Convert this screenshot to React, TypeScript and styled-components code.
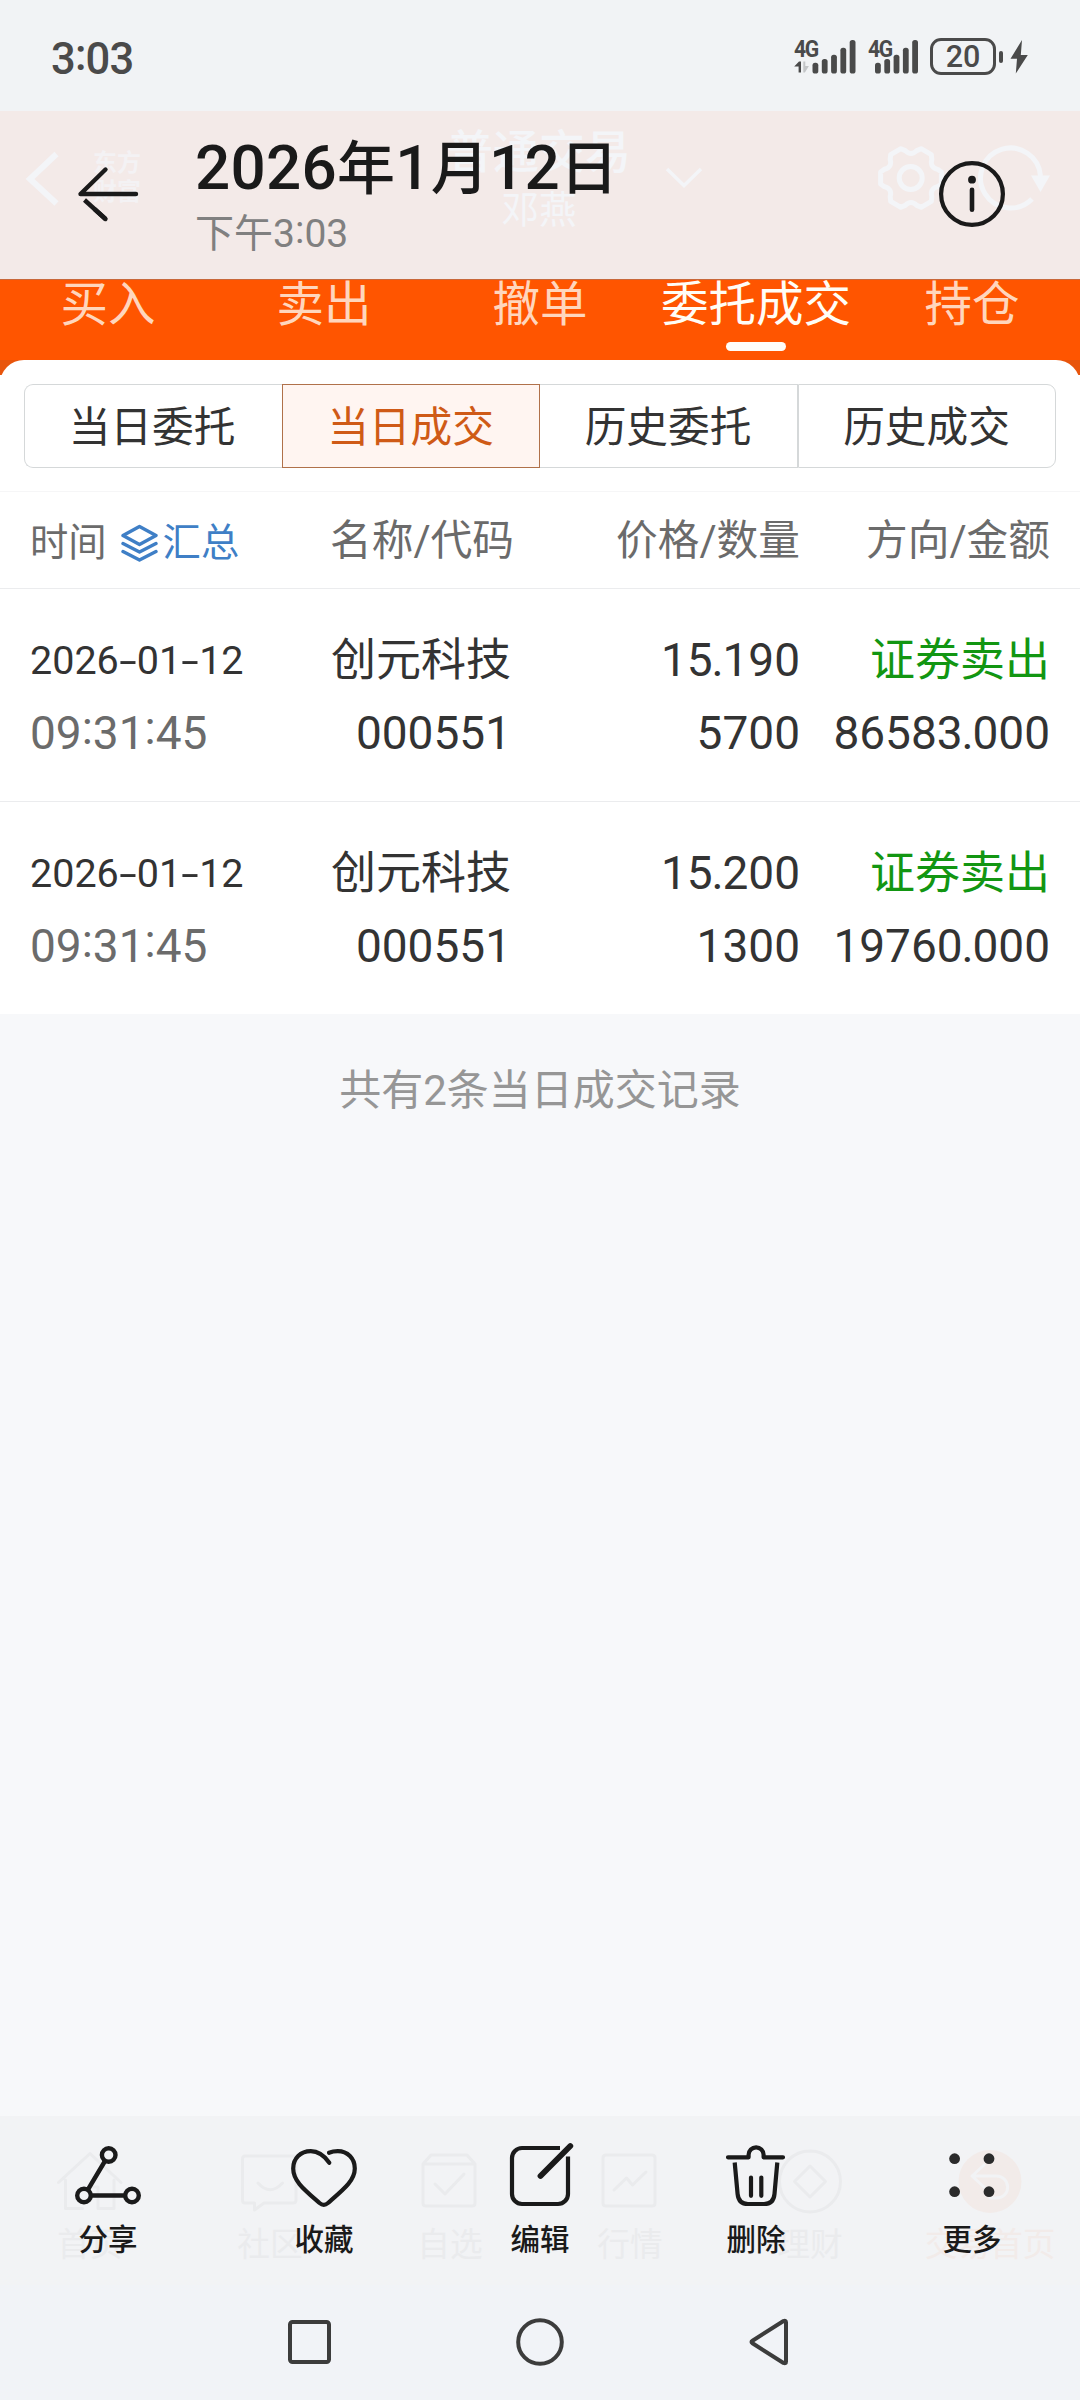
import React from "react";
import styled, { createGlobalStyle } from "styled-components";

const GlobalStyle = createGlobalStyle`
  *, *::before, *::after { box-sizing: border-box; }
  html, body { margin: 0; padding: 0; background: #f7f8fa; }
  body { font-family: Roboto, "Noto Sans CJK SC", sans-serif; }
`;

const Screen = styled.div`
  width: 1080px;
  height: 2400px;
  display: flex;
  flex-direction: column;
  background: #f7f8fa;
  overflow: hidden;
`;

/* ---------- text helpers ---------- */

const Colon = styled.span`
  vertical-align: 0.1em;
  line-height: 0;
`;
const Point = styled.span`
  margin: 0 -0.026em;
`;
const Dash = styled.span`
  display: inline-block;
  width: 0.455em;
  text-align: center;
  transform: scaleX(1.6);
`;

const Figures = ({ children }: { children: string }) => (
  <>
    {children.split(/([:.\-])/).map((part, i) => {
      if (part === ":") return <Colon key={i}>:</Colon>;
      if (part === ".") return <Point key={i}>.</Point>;
      if (part === "-") return <Dash key={i}>-</Dash>;
      return part;
    })}
  </>
);

/* ---------- status bar ---------- */

const StatusBar = styled.header`
  flex: none;
  height: 111px;
  padding: 2px 51px 0 51px;
  display: flex;
  align-items: center;
  justify-content: space-between;
  background: #f1f3f5;
  color: #4a4a4a;
`;
const Clock = styled.time`
  padding-top: 6px;
  font-size: 43.5px;
  line-height: 50px;
  font-weight: 500;
  letter-spacing: -0.8px;
`;
const StatusIcons = styled.div`
  display: flex;
  align-items: center;
  height: 38px;
`;
const Signal = styled.div<{ $w: number; $gap: number }>`
  position: relative;
  width: ${(p) => p.$w}px;
  height: 36px;
  margin-right: ${(p) => p.$gap}px;
  svg { display: block; }
`;
const Network = styled.span`
  position: absolute;
  left: 0;
  top: -1px;
  font-size: 23px;
  line-height: 24px;
  font-weight: 700;
  letter-spacing: -1.5px;
  transform: scaleX(0.92);
  transform-origin: left;
`;
const Battery = styled.div`
  width: 66px;
  height: 37px;
  border: 3px solid #4a4a4a;
  border-radius: 11px;
  display: flex;
  align-items: center;
  justify-content: center;
  font-size: 30.5px;
  line-height: 31px;
  font-weight: 500;
`;
const BatteryCap = styled.i`
  width: 4px;
  height: 12px;
  margin: 0 7px 0 3px;
  border-radius: 2px;
  background: #4a4a4a;
`;

const tops = [22.7, 19, 14.7, 7.7, 0];
const Bars = ({ x, w }: { x: number; w: number }) => (
  <svg width={w} height="36" fill="#4a4a4a">
    {tops.map((t, i) => (
      <rect key={i} x={x + i * 9.3} y={t + 1} width="5.8" height={33.5 - t} rx="2.6" />
    ))}
    {x > 10 && (
      <>
        <path d="M5 22.5 h2 v11 h-2.4 v-6 h-4.4 z" />
        <path d="M9.3 22.5 h2 v4.5 h3.6 l-4 6.5 h-1.6 z" fill="#c4c6c8" />
      </>
    )}
  </svg>
);

/* ---------- gallery header ---------- */

const TitleBar = styled.section`
  flex: none;
  position: relative;
  height: 168px;
  display: flex;
  background: #f3eae8;
  color: #1a1a1a;
`;
const Underlay = styled.div`
  position: absolute;
  inset: 0;
  color: #f3f5f8;
  svg { position: absolute; left: 0; top: 0; }
`;
const FaintTitle = styled.div`
  position: absolute;
  left: 446px;
  top: 13px;
  width: 186px;
  text-align: center;
  font-size: 46px;
  line-height: 56px;
  font-weight: 500;
`;
const FaintName = styled.div`
  font-size: 37.5px;
  line-height: 56px;
  font-weight: 400;
  padding-top: 2px;
`;
const FaintBrand = styled.div`
  position: absolute;
  left: 93px;
  top: 38px;
  font-size: 24px;
  line-height: 29px;
  font-weight: 700;
  opacity: 0.75;
`;
const BackButton = styled.div`
  position: relative;
  width: 195px;
  height: 168px;
  svg { display: block; }
`;
const TitleText = styled.div`
  position: relative;
  flex: 1;
`;
const Title = styled.h1`
  margin: 21px 0 0;
  font-size: 58px;
  line-height: 74px;
  font-weight: 500;
  letter-spacing: 0.25px;
  white-space: nowrap;
`;
const TitleNum = styled.span`
  font-size: 62px;
  line-height: 0;
`;
const Subtitle = styled.div`
  margin-top: 3px;
  font-size: 39px;
  line-height: 50px;
  color: #808080;
`;
const InfoButton = styled.div`
  position: relative;
  width: 216px;
  height: 168px;
`;

const gearPath = (() => {
  const p = (r: number, deg: number) => {
    const a = (deg * Math.PI) / 180;
    return `${(911 + r * Math.cos(a)).toFixed(1)} ${(67 + r * Math.sin(a)).toFixed(1)}`;
  };
  let d = "";
  for (let i = 0; i < 6; i++) {
    const a = i * 60;
    d += `${i ? "L" : "M"}${p(31, a - 11)} L${p(31, a + 11)} L${p(28, a + 18)} Q${p(21.5, a + 30)} ${p(28, a + 42)} `;
  }
  return d + "Z";
})();

/* ---------- trade tabs ---------- */

const Tabs = styled.nav`
  flex: none;
  height: 81px;
  display: grid;
  grid-template-columns: repeat(5, 1fr);
  background: #ff5500;
  border-top: 1px solid #c8683a;
`;
const Tab = styled.div<{ $on?: boolean }>`
  display: flex;
  flex-direction: column;
  align-items: center;
  font-size: 47.5px;
  line-height: 50px;
  color: ${(p) => (p.$on ? "#fffdf6" : "#ffd6bd")};
  &::after {
    content: "";
    width: 60px;
    height: 9px;
    margin-top: 12px;
    border-radius: 5px;
    background: ${(p) => (p.$on ? "#fffdf8" : "transparent")};
  }
`;

/* ---------- records panel ---------- */

const PanelEdge = styled.div`
  flex: none;
  background: linear-gradient(#e8550c 15px, #ffffff 15px);
`;
const Panel = styled.main`
  background: #ffffff;
  border-radius: 24px 24px 0 0;
`;
const Segments = styled.div`
  height: 131px;
  padding: 24px 24px 23px;
  display: grid;
  grid-template-columns: repeat(4, 1fr);
`;
const Segment = styled.div<{ $on?: boolean }>`
  display: flex;
  align-items: center;
  justify-content: center;
  font-size: 41.7px;
  line-height: 50px;
  padding: 4px 1px 0 0;
  color: ${(p) => (p.$on ? "#cf5a16" : "#333333")};
  background: ${(p) => (p.$on ? "#fff5f1" : "#ffffff")};
  border: 1px solid ${(p) => (p.$on ? "#b0714a" : "#d5d8d9")};
  &:first-child { border-radius: 9px 0 0 9px; border-right: 0; padding-right: 3px; }
  &:nth-child(3) { border-left: 0; }
  &:last-child { border-radius: 0 9px 9px 0; }
`;
const Columns = styled.div`
  display: grid;
  grid-template-columns: 220px 261px 289px 250px;
  padding-left: 30px;
`;
const Head = styled(Columns)`
  grid-template-columns: 220px 264px 286px 250px;
  height: 98px;
  padding-top: 2px;
  align-items: center;
  border-top: 1px solid #f6f6f7;
  border-bottom: 1px solid #ebecee;
  font-size: 41.7px;
  line-height: 50px;
  color: #6b6b6b;
`;
const HeadCell = styled.div`
  text-align: right;
  white-space: nowrap;
`;
const TimeHead = styled.div`
  display: flex;
  align-items: center;
  font-size: 38.3px;
  padding-top: 3px;
  white-space: nowrap;
`;
const Summary = styled.div`
  display: flex;
  align-items: center;
  gap: 5px;
  margin-left: 14px;
  color: #3f7fc6;
`;
const Record = styled(Columns)`
  height: 213px;
  padding-top: 35px;
  align-content: start;
  border-bottom: 1px solid #ebecee;
  &:last-child { height: 212px; border-bottom: 0; }
`;
const Cell = styled.div<{ $left?: boolean; $size?: number; $tone?: string }>`
  height: 73px;
  line-height: 73px;
  white-space: nowrap;
  text-align: ${(p) => (p.$left ? "left" : "right")};
  font-size: ${(p) => p.$size ?? 46}px;
  color: ${(p) => p.$tone ?? "#333333"};
`;
const Count = styled.p`
  flex: 1;
  margin: 0;
  padding-top: 52px;
  text-align: center;
  font-size: 42px;
  line-height: 50px;
  color: #969696;
`;

/* ---------- bottom bars ---------- */

const ActionBar = styled.footer`
  flex: none;
  position: relative;
  height: 169px;
  background: #f2f3f5;
`;
const Actions = styled.div<{ $faint?: boolean }>`
  display: grid;
  grid-auto-flow: column;
  grid-auto-columns: 1fr;
  ${(p) => (p.$faint ? "position: absolute; inset: 0; padding-top: 29px; color: #eaebed;" : "position: relative; padding-top: 22px; color: #1a1a1a;")}
`;
const Action = styled.div<{ $faint?: boolean; $warm?: boolean }>`
  display: flex;
  flex-direction: column;
  align-items: center;
  font-size: ${(p) => (p.$faint ? 32.7 : 29.5)}px;
  line-height: 36px;
  font-weight: ${(p) => (p.$faint ? 400 : 500)};
  white-space: nowrap;
  ${(p) => p.$warm && "color: #f2ebe9;"}
  svg {
    display: block;
    margin-bottom: ${(p) => (p.$faint ? 10 : 12)}px;
  }
`;
const NavBar = styled.div`
  flex: none;
  height: 115px;
  display: flex;
  justify-content: center;
  gap: 159px;
  padding-top: 21px;
  background: #f1f3f7;
`;

const Icon = ({ w = 4.2, children }: { w?: number; children: React.ReactNode }) => (
  <svg width="72" height="72" viewBox="0 0 72 72" fill="none" stroke="currentColor" strokeWidth={w}
    strokeLinecap="round" strokeLinejoin="round">
    {children}
  </svg>
);

const actions = [
  {
    label: "分享",
    icon: (
      <Icon w={4.4}>
        <circle cx="36.7" cy="17" r="6.8" />
        <circle cx="12" cy="57.5" r="6.8" />
        <circle cx="60" cy="57.5" r="6.8" />
        <path d="M33 23 L16 51.5 M19 57.5 H53" strokeLinecap="butt" />
      </Icon>
    ),
  },
  {
    label: "收藏",
    icon: (
      <Icon>
        <path d="M41.3 24.7 C36.5 18 30.5 13.2 22.8 13.2 C12.5 13.2 5.2 20.5 5.2 30.5 C5.2 43 16 51.5 31.5 65 Q35.8 68.6 40 65 C56 51 66.8 42.5 66.8 30.5 C66.8 20.5 59.5 13.2 49.8 13.2 C46.5 13.2 43.5 13.8 41 14.8" />
      </Icon>
    ),
  },
  {
    label: "编辑",
    icon: (
      <Icon>
        <path d="M56 10 H18 A10 10 0 0 0 8 20 V56 A10 10 0 0 0 18 66 H54 A10 10 0 0 0 64 56 V18.5" strokeLinecap="butt" />
        <path d="M36.5 38 L66.3 8" strokeWidth="5.8" />
      </Icon>
    ),
  },
  {
    label: "删除",
    icon: (
      <Icon>
        <path d="M8 19.3 H28.6 V16.8 A7.5 7.5 0 0 1 43.6 16.8 V19.3 H63" />
        <path d="M14.7 24.5 L17.6 56 Q18.6 66 28 66 H44 Q53.6 66 54.5 56 L57.3 24.5" strokeLinecap="butt" />
        <path d="M31 39.5 V57.8 M41.3 39.5 V57.8" />
      </Icon>
    ),
  },
  {
    label: "更多",
    icon: (
      <Icon w={0}>
        <g fill="#2b2b2b">
          <circle cx="18.6" cy="20.7" r="5.4" />
          <circle cx="53" cy="20.7" r="5.4" />
          <circle cx="18.6" cy="53.7" r="5.4" />
          <circle cx="53" cy="53.7" r="5.4" />
        </g>
      </Icon>
    ),
  },
];

const appTabs = [
  {
    label: "首页",
    icon: <path d="M4.5 37.5 L36 8.5 L67 37.5 M11.5 35 V63.5 H28.5 M36 42 H44 V63.5 H60 V35" />,
  },
  {
    label: "社区",
    icon: <path d="M11 11 H59 Q62 11 62 14 V55 Q62 58 59 58 H30 L20.5 65 V58 H11 Q8.5 58 8.5 55 V14 Q8.5 11 11 11 Z M24 38 Q36 51.5 48.5 38" />,
  },
  {
    label: "自选",
    icon: <path d="M9 19 L17 10 H53 L61 19 V58 Q61 61 58 61 H12 Q9 61 9 58 Z H61 M21 39 L31 49 L50 29" />,
  },
  {
    label: "行情",
    icon: <path d="M12 10 H58 Q61 10 61 13 V58 Q61 61 58 61 H12 Q9 61 9 58 V13 Q9 10 12 10 Z M20 45 L32.5 33 L38.5 40 L52 27" />,
  },
  {
    label: "理财",
    icon: <path d="M36 6 A30.5 30.5 0 0 1 36 67 A30.5 30.5 0 0 1 36 6 Z M36 21 L51.5 36.5 L36 52 L20.5 36.5 Z" />,
  },
  {
    label: "交易首页",
    warm: true,
    icon: (
      <>
        <circle cx="36" cy="36.5" r="31.5" fill="currentColor" stroke="none" />
        <path d="M30 20 L18 31 L30 42 M18 31 H42 C57 31 58 53 42 53 H36" stroke="#f2f3f5" />
      </>
    ),
  },
];

const records = [
  { date: "2026-01-12", time: "09:31:45", name: "创元科技", code: "000551", price: "15.190", qty: "5700", side: "证券卖出", amount: "86583.000" },
  { date: "2026-01-12", time: "09:31:45", name: "创元科技", code: "000551", price: "15.200", qty: "1300", side: "证券卖出", amount: "19760.000" },
];

export default function App() {
  return (
    <Screen>
      <GlobalStyle />
      <StatusBar>
        <Clock><Figures>3:03</Figures></Clock>
        <StatusIcons>
          <Signal $w={62} $gap={12}>
            <Bars x={18.5} w={62} />
            <Network>4G</Network>
          </Signal>
          <Signal $w={50} $gap={12}>
            <Bars x={7} w={50} />
            <Network>4G</Network>
          </Signal>
          <Battery>20</Battery>
          <BatteryCap />
          <svg width="19" height="36" fill="#4a4a4a">
            <path d="M12 1 L0.5 19.7 H7 L5.8 34.5 L17.8 16 H10.8 Z" />
          </svg>
        </StatusIcons>
      </StatusBar>

      <TitleBar>
        <Underlay>
          <FaintBrand>东方<br />财富</FaintBrand>
          <FaintTitle>
            普通交易
            <FaintName>邓燕</FaintName>
          </FaintTitle>
          <svg width="1080" height="168" fill="none" stroke="currentColor" strokeWidth="5">
            <path d="M56.5 43 L30 68 L56.5 92.5" strokeWidth="6" />
            <path d="M667 58 L684 74.5 L701 58" strokeWidth="3.5" />
            <path d={gearPath} strokeLinejoin="round" />
            <circle cx="910.7" cy="67" r="11.5" />
            <path d="M1040.5 65 A30 30 0 1 0 1032 88" />
            <path d="M1031 64.5 H1050 L1040.5 81 Z" fill="currentColor" stroke="none" />
          </svg>
        </Underlay>
        <BackButton>
          <svg width="195" height="168" fill="none" stroke="#1a1a1a" strokeWidth="4.4" strokeLinecap="round" strokeLinejoin="round">
            <path d="M136 83 H80.5 L105.5 58.5" />
            <path d="M84.5 89 L105.5 108" strokeLinecap="butt" />
            <path d="M95 98.5 L105.5 108" />
          </svg>
        </BackButton>
        <TitleText>
          <Title>
            <TitleNum>2026</TitleNum>年<TitleNum>1</TitleNum>月<TitleNum>12</TitleNum>日
          </Title>
          <Subtitle>下午<Figures>3:03</Figures></Subtitle>
        </TitleText>
        <InfoButton>
          <svg width="216" height="168" fill="none" stroke="#1a1a1a" strokeWidth="4.2" strokeLinecap="round">
            <circle cx="108" cy="83" r="30.9" />
            <circle cx="108" cy="68.7" r="3.9" fill="#1a1a1a" stroke="none" />
            <path d="M108 78.7 V98.8" strokeWidth="4.6" />
          </svg>
        </InfoButton>
      </TitleBar>

      <Tabs>
        <Tab>买入</Tab>
        <Tab>卖出</Tab>
        <Tab>撤单</Tab>
        <Tab $on>委托成交</Tab>
        <Tab>持仓</Tab>
      </Tabs>

      <PanelEdge>
        <Panel>
          <Segments>
            <Segment>当日委托</Segment>
            <Segment $on>当日成交</Segment>
            <Segment>历史委托</Segment>
            <Segment>历史成交</Segment>
          </Segments>
          <Head>
            <TimeHead>
              时间
              <Summary>
                <svg width="37" height="38" viewBox="0 0 37 38" fill="none" stroke="currentColor" strokeWidth="3.4" strokeLinejoin="round" strokeLinecap="round">
                  <path d="M18.5 2.5 L35 11.5 L18.5 20.5 L2 11.5 Z" />
                  <path d="M2 19.5 L18.5 28 L35 19.5 M2 27.5 L18.5 36 L35 27.5" />
                </svg>
                汇总
              </Summary>
            </TimeHead>
            <HeadCell>名称/代码</HeadCell>
            <HeadCell>价格/数量</HeadCell>
            <HeadCell>方向/金额</HeadCell>
          </Head>
          {records.map((r, i) => (
            <Record key={i}>
              <Cell $left $size={39.5}><Figures>{r.date}</Figures></Cell>
              <Cell $size={45}>{r.name}</Cell>
              <Cell><Figures>{r.price}</Figures></Cell>
              <Cell $size={45} $tone="#129612">{r.side}</Cell>
              <Cell $left $tone="#6b6b6b"><Figures>{r.time}</Figures></Cell>
              <Cell>{r.code}</Cell>
              <Cell>{r.qty}</Cell>
              <Cell><Figures>{r.amount}</Figures></Cell>
            </Record>
          ))}
        </Panel>
      </PanelEdge>
      <Count>共有2条当日成交记录</Count>

      <ActionBar>
        <Actions $faint>
          {appTabs.map((t) => (
            <Action key={t.label} $faint $warm={t.warm}>
              <Icon w={3}>{t.icon}</Icon>
              {t.label}
            </Action>
          ))}
        </Actions>
        <Actions>
          {actions.map((a) => (
            <Action key={a.label}>
              {a.icon}
              {a.label}
            </Action>
          ))}
        </Actions>
      </ActionBar>
      <NavBar>
        <svg width="72" height="72" fill="none" stroke="#3c3c3c" strokeWidth="4">
          <rect x="17" y="16" width="39" height="40" rx="2.5" />
        </svg>
        <svg width="72" height="72" fill="none" stroke="#3c3c3c" strokeWidth="4">
          <circle cx="36" cy="36" r="21.8" />
        </svg>
        <svg width="72" height="72" fill="none" stroke="#3c3c3c" strokeWidth="4" strokeLinejoin="round">
          <path d="M17.500 34.7 Q15.500 36 17.500 37.3 L48.5 57 Q51 58 51 55.5 V16.500 Q51 14 48.5 15 Z" />
        </svg>
      </NavBar>
    </Screen>
  );
}
